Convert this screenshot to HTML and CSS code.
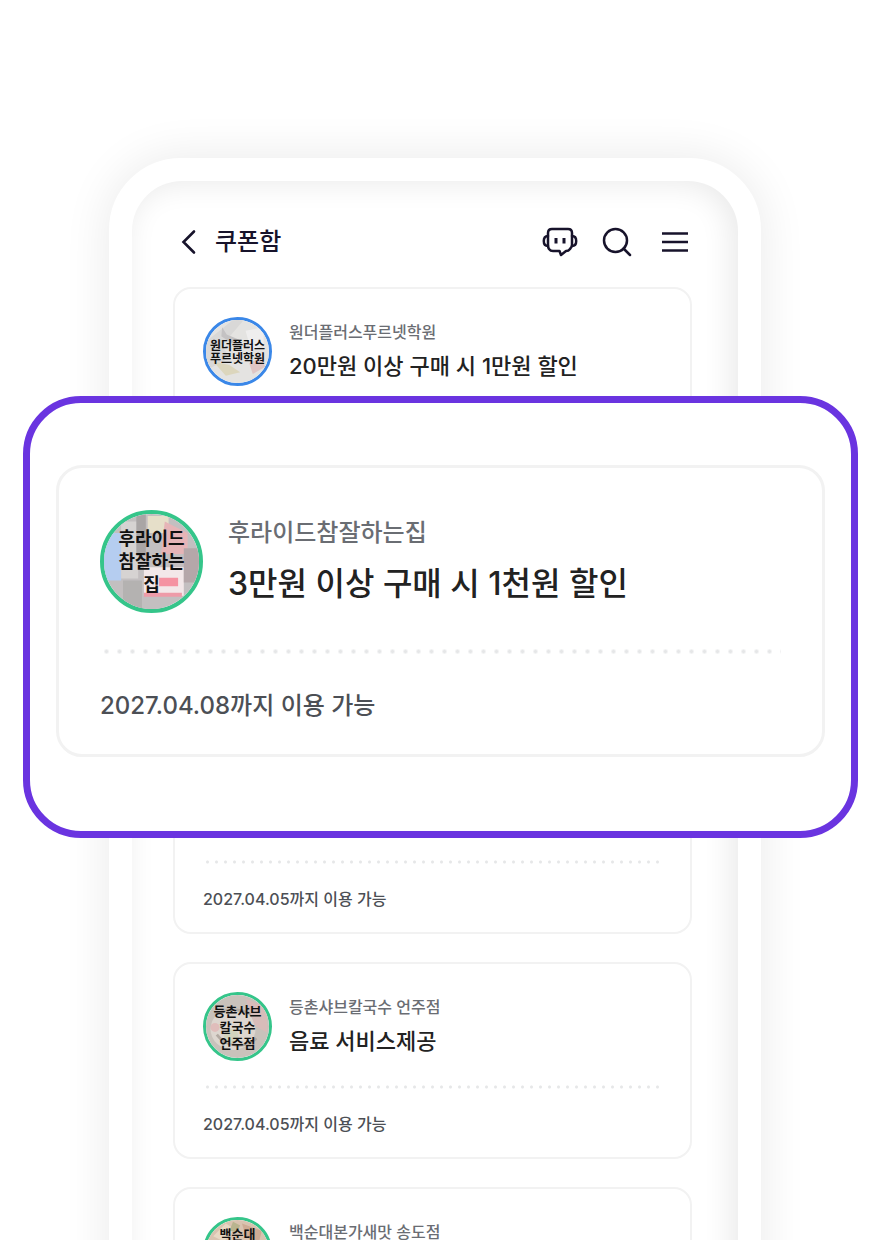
FILE: index.html
```html
<!DOCTYPE html>
<html lang="ko">
<head>
    <meta charset="UTF-8">
    <meta name="viewport" content="width=device-width, initial-scale=1.0">
    <title>쿠폰함</title>
    <link rel="stylesheet" href="styles.css">
</head>
<body>
    <main class="stage">
        <div class="phone">
            <header class="topbar">
                <button class="icon-btn back" aria-label="뒤로">
                    <svg width="16" height="26" viewBox="0 0 16 26" fill="none" stroke="currentColor" stroke-width="2.6" stroke-linecap="round" stroke-linejoin="miter"><path d="M13 2.500 2.500 13 13 23.500"/></svg>
                </button>
                <h1 class="page-title">쿠폰함</h1>
                <nav class="actions">
                    <button class="icon-btn" aria-label="챗봇">
                        <svg width="36" height="32" viewBox="0 0 36 32" fill="none" stroke="currentColor" stroke-width="2.5" stroke-linecap="round" stroke-linejoin="round">
                            <path d="M10 3h16q4 0 4 4v12q0 2-2 4-1.500 2-4 2l-5 4-1.500-4H11q-2.500 0-4-2-1-1.500-1-4V7q0-4 4-4z"/>
                            <path d="M6 10C3 10 1.800 12 1.800 15S3 20 6 20M30 10c3 0 4.200 2 4.200 5S33 20 30 20"/>
                            <path d="M14 13.500v2.500M22 13.500v2.500" stroke-width="3" stroke-linecap="square"/>
                        </svg>
                    </button>
                    <button class="icon-btn" aria-label="검색">
                        <svg width="30" height="30" viewBox="0 0 30 30" fill="none" stroke="currentColor" stroke-width="2.500" stroke-linecap="round"><circle cx="13.500" cy="13.500" r="11.500"/><path d="m21.500 21.500 6.500 6.500"/></svg>
                    </button>
                    <button class="icon-btn" aria-label="메뉴">
                        <svg width="26" height="22" viewBox="0 0 26 22" fill="none" stroke="currentColor" stroke-width="2.500"><path d="M0 2.500h26M0 11h26M0 19.500h26"/></svg>
                    </button>
                </nav>
            </header>

            <ul class="coupons">
                <li class="coupon">
                    <div class="coupon-head">
                        <div class="avatar blue">
                            <svg class="photo" viewBox="0 0 70 70" preserveAspectRatio="none">
                                <rect width="70" height="70" fill="#e4e3e1"/>
                                <path d="M0 24 30 0h12L18 28l8 14L0 56z" fill="#d9d8d7"/>
                                <path d="m18 8 5 8 14 6-8 4-12-8z" fill="#c4c2c3"/>
                                <path d="m48 48 12-6 6 10-14 8z" fill="#dfc6c5"/>
                                <path d="m8 46 18 4 12 8-16 4z" fill="#dcd6bd"/>
                                <path d="M44 12 64 8v20l-14 6z" fill="#efeeee"/>
                            </svg>
                            <span class="avatar-text">원더플러스<br>푸르넷학원</span>
                        </div>
                        <div class="info">
                            <p class="store">원더플러스푸르넷학원</p>
                            <h2 class="benefit">20만원 이상 구매 시 1만원 할인</h2>
                        </div>
                    </div>
                </li>
                <li class="coupon"></li>
                <li class="coupon">
                    <div class="coupon-head"></div>
                    <div class="dots"></div>
                    <p class="expiry">2027.04.05까지 이용 가능</p>
                </li>
                <li class="coupon">
                    <div class="coupon-head">
                        <div class="avatar">
                            <svg class="photo" viewBox="0 0 70 70" preserveAspectRatio="none">
                                <rect width="70" height="70" fill="#c9c2bb"/>
                                <ellipse cx="30" cy="38" rx="25" ry="23" fill="#ddd6cf"/>
                                <path d="M10 22c12-8 34-8 46 4M12 44c10 14 32 16 44 4" fill="none" stroke="#b3aaa2" stroke-width="3"/>
                                <path d="M44 4 68 14v28l-14-8z" fill="#d8bcb9"/>
                                <circle cx="28" cy="46" r="8" fill="#d3d4bd"/>
                                <circle cx="10" cy="36" r="5" fill="#e0bdbb"/>
                            </svg>
                            <span class="avatar-text">등촌샤브<br>칼국수<br>언주점</span>
                        </div>
                        <div class="info">
                            <p class="store">등촌샤브칼국수 언주점</p>
                            <h2 class="benefit">음료 서비스제공</h2>
                        </div>
                    </div>
                    <div class="dots"></div>
                    <p class="expiry">2027.04.05까지 이용 가능</p>
                </li>
                <li class="coupon">
                    <div class="coupon-head">
                        <div class="avatar top">
                            <svg class="photo" viewBox="0 0 70 70" preserveAspectRatio="none">
                                <rect width="70" height="70" fill="#d9c3b0"/>
                                <path d="m8 18 14-14 10 6-12 14z" fill="#e8d8c4"/>
                                <path d="m40 4 22 8-4 16-14-10z" fill="#ceab94"/>
                                <path d="m30 2 8 4-4 8-8-2z" fill="#b9b48e"/>
                            </svg>
                            <span class="avatar-text">백순대</span>
                        </div>
                        <div class="info">
                            <p class="store">백순대본가새맛 송도점</p>
                        </div>
                    </div>
                </li>
            </ul>
        </div>

        <section class="spotlight">
            <article class="coupon large">
                <div class="coupon-head">
                    <div class="avatar">
                        <svg class="photo" viewBox="0 0 100 100" preserveAspectRatio="none">
                            <rect width="100" height="100" fill="#c3bfc0"/>
                            <path d="M0 20h20l-2 50H0z" fill="#b5cdf0"/>
                            <path d="M18 8h18v60H18z" fill="#d6d3d2"/>
                            <path d="M34 0h10v44H34z" fill="#a9a5a5"/>
                            <path d="M46 2h22v18H46z" fill="#e6dfc9"/>
                            <path d="m64 8 24 12v22H60z" fill="#e6b4b7"/>
                            <path d="M42 56h42v30H42z" fill="#f3e8e9"/>
                            <path d="M58 67h20v9H58z" fill="#f593a2"/>
                            <path d="M42 83h40v4H42z" fill="#ee9ba8"/>
                            <path d="M20 70h20v30H20z" fill="#b4b2b1"/>
                            <path d="M84 36h16v36H84z" fill="#b5a7a9"/>
                        </svg>
                        <span class="avatar-text">후라이드<br>참잘하는<br>집</span>
                    </div>
                    <div class="info">
                        <p class="store">후라이드참잘하는집</p>
                        <h2 class="benefit">3만원 이상 구매 시 1천원 할인</h2>
                    </div>
                </div>
                <div class="dots"></div>
                <p class="expiry">2027.04.08까지 이용 가능</p>
            </article>
        </section>
    </main>
</body>
</html>
```
FILE: styles.css
```css
* {
    box-sizing: border-box;
}
body {
    margin: 0;
    background: #fff;
    color: #222;
    font-family: Inter, "Noto Sans CJK KR", sans-serif;
}
h1, h2, p, ul {
    margin: 0;
    padding: 0;
}
.stage {
    position: relative;
    height: 100vh;
    overflow: hidden;
    padding: 158px 119px 0 109px;
}
.phone {
    border: 23px solid #fff;
    border-radius: 72px;
    padding: 40px 46px 40px 41px;
    background: #fff;
    box-shadow: 0 0 48px rgba(0, 0, 0, 0.09);
    position: relative;
}
.phone::before {
    content: "";
    position: absolute;
    inset: 0;
    border-radius: 50px;
    box-shadow: inset -6px 2px 30px rgba(0, 0, 0, 0.09);
    pointer-events: none;
}
.topbar {
    display: flex;
    align-items: center;
    height: 42px;
    padding: 0 4px 0 8px;
    color: #17132b;
}
.icon-btn {
    display: flex;
    padding: 0;
    border: none;
    background: none;
    color: inherit;
    cursor: pointer;
}
.page-title {
    margin-left: 18px;
    font-size: 24px;
    line-height: 32px;
    font-weight: 500;
}
.actions {
    display: flex;
    align-items: center;
    gap: 24px;
    margin-left: auto;
}
.actions .icon-btn:last-child {
    margin-left: 6px;
}
.coupons {
    display: grid;
    gap: 28px;
    margin-top: 24px;
    list-style: none;
}
.coupon {
    min-height: 197px;
    padding: 28px 28px 23px;
    border: 2px solid #f2f2f2;
    border-radius: 18px;
}
.coupon-head {
    display: flex;
    gap: 17px;
    min-height: 69px;
}
.avatar {
    position: relative;
    display: flex;
    align-items: center;
    justify-content: center;
    flex: none;
    width: 69px;
    height: 69px;
    overflow: hidden;
    border: 3px solid #35c58a;
    border-radius: 50%;
    color: #111;
    font-size: 13px;
    line-height: 16px;
    font-weight: 700;
    text-align: center;
    white-space: nowrap;
}
.avatar.blue {
    border-color: #3a87e8;
    font-size: 12px;
    line-height: 13px;
}
.avatar.top {
    align-items: flex-start;
    padding-top: 6px;
}
.photo {
    position: absolute;
    inset: 0;
    width: 100%;
    height: 100%;
}
.avatar-text {
    position: relative;
}
.info {
    padding-top: 3px;
}
.store {
    color: #6a6d73;
    font-size: 16px;
    line-height: 24px;
    font-weight: 500;
}
.benefit {
    margin-top: 6px;
    font-size: 22px;
    line-height: 32px;
    font-weight: 500;
}
.dots {
    height: 4px;
    margin-top: 24px;
    background: radial-gradient(circle, #e6e7e8 1px, transparent 2px) 0 0 / 9px 4px repeat-x;
}
.expiry {
    margin-top: 25px;
    color: #4c4f55;
    font-size: 16px;
    line-height: 20px;
    font-weight: 500;
}
/* enlarged coupon laid over the phone */
.spotlight {
    position: absolute;
    top: 396px;
    left: 23px;
    right: 22px;
    padding: 62px 26px 74px;
    border: 7px solid #6a34e0;
    border-radius: 58px;
    background: #fff;
}
.large {
    min-height: 292px;
    padding: 42px 41px 33px;
    border-width: 3px;
    border-radius: 26px;
}
.large .coupon-head {
    gap: 25px;
}
.large .avatar {
    width: 103px;
    height: 103px;
    border-width: 4px;
    font-size: 18px;
    line-height: 23px;
}
.large .info {
    padding-top: 5px;
}
.large .store {
    font-size: 24px;
    line-height: 36px;
}
.large .benefit {
    margin-top: 9px;
    font-size: 32px;
    line-height: 48px;
}
.large .dots {
    height: 5px;
    margin-top: 36px;
    background: radial-gradient(circle, #e6e7e8 1px, transparent 3px) 0 0 / 13px 5px repeat-x;
}
.large .expiry {
    margin-top: 37px;
    font-size: 24px;
    line-height: 30px;
}
```
